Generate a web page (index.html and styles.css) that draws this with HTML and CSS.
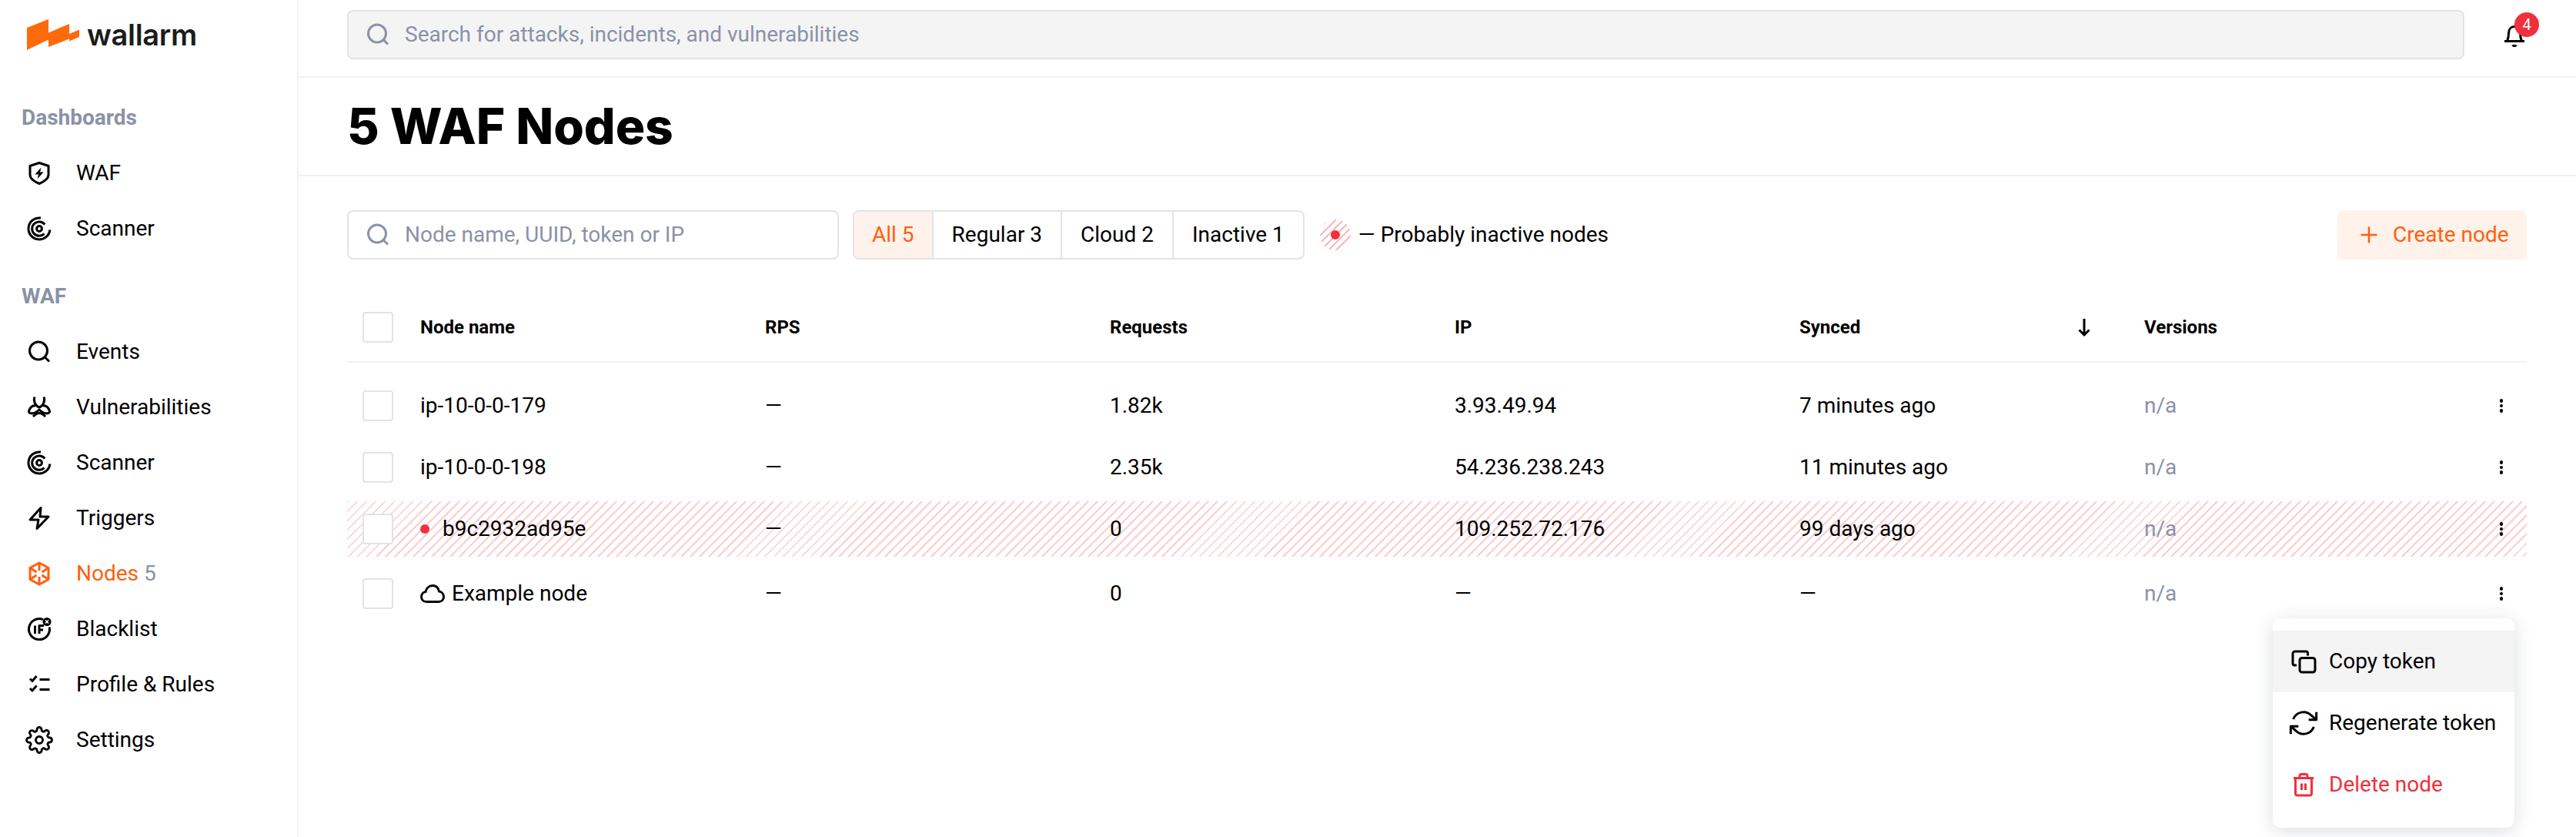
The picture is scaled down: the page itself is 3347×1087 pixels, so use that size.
FILE: index.html
```html
<!DOCTYPE html>
<html lang="en">
<head>
    <meta charset="UTF-8">
    <title>5 WAF Nodes - Wallarm</title>
    <link rel="stylesheet" href="styles.css">
</head>
<body>
    <svg class="defs" width="0" height="0">
        <symbol id="i-search" viewBox="0 0 40 40"><circle cx="19" cy="18.5" r="11.5"/><path d="M27.5 27l5.5 5.5"/></symbol>
        <symbol id="i-scanner" viewBox="0 0 40 40"><path d="M22 6.1A14 14 0 1 0 33.9 21.5"/><path d="M27.2 14.5A9.2 9.2 0 1 0 26.5 26.5"/><circle cx="20" cy="20" r="3.4"/></symbol>
    </svg>
    <div class="app">
        <aside class="sidebar">
            <a class="logo">
                <svg width="68" height="40" viewBox="0 0 68 40"><path class="logo-mark" d="M0 11L28 0V17.500L55 6V19L68 13.500V23L55 28.500V25.500L28 36V26.500L0 40Z"/></svg>
                <span class="logo-text">wallarm</span>
            </a>
            <div class="nav-label">Dashboards</div>
            <a class="nav-item">
                <svg class="icon" viewBox="0 0 40 40"><path d="M20 6.500L32 10.500V22C32 27 26 31 20 33.500C14 31 8 27 8 22V10.500Z"/><path class="solid" d="M22.500 12.500L14.500 21.500H19L17.500 27.500L25.500 18.500H21Z"/></svg>
                <span>WAF</span>
            </a>
            <a class="nav-item">
                <svg class="icon"><use href="#i-scanner"/></svg>
                <span>Scanner</span>
            </a>
            <div class="nav-label nav-label-gap">WAF</div>
            <a class="nav-item">
                <svg class="icon"><use href="#i-search"/></svg>
                <span>Events</span>
            </a>
            <a class="nav-item">
                <svg class="icon" viewBox="0 0 40 40"><path d="M14 6.500C12 12 15 18 20 20C25 18 28 12 26 6.500"/><path d="M6.500 27C6.500 21 11 17 15.500 18M33.500 27C33.500 21 29 17 24.500 18"/><path d="M6.500 27C11 29 16 27 20 23C24 27 29 29 33.500 27"/><path d="M12 32C15 29 17.500 27.500 20 27.500C22.500 27.500 25 29 28 32"/></svg>
                <span>Vulnerabilities</span>
            </a>
            <a class="nav-item">
                <svg class="icon"><use href="#i-scanner"/></svg>
                <span>Scanner</span>
            </a>
            <a class="nav-item">
                <svg class="icon" viewBox="0 0 40 40"><path d="M22 6.500L8 22H19L17 33.500L32 18H21Z"/></svg>
                <span>Triggers</span>
            </a>
            <a class="nav-item active">
                <svg class="icon" viewBox="0 0 40 40"><path d="M20 6L32 12.500V27.500L20 34L8 27.500V12.500Z"/><path d="M20 6V16M20 24V34M8 12.500L16.500 18M32 12.500L23.500 18M8 27.500L16.500 22M32 27.500L23.500 22"/></svg>
                <span>Nodes <em>5</em></span>
            </a>
            <a class="nav-item">
                <svg class="icon" viewBox="0 0 40 40"><path d="M25 7.600A13.500 13.500 0 1 0 33.200 17.500"/><path d="M14.500 15.500V26M20 26V15.500H26M20 21H25"/><circle class="solid" cx="30" cy="10.500" r="5.500"/><path class="cross" d="M28 8.500L32 12.500M32 8.500L28 12.500"/></svg>
                <span>Blacklist</span>
            </a>
            <a class="nav-item">
                <svg class="icon" viewBox="0 0 40 40"><path d="M8 12.500L11 15.500L16.500 9M8 25L11 28L16.500 21.500"/><path d="M20.500 13.500H33.500M20.500 26.500H33.500"/></svg>
                <span>Profile &amp; Rules</span>
            </a>
            <a class="nav-item">
                <svg class="icon gear" viewBox="0 0 24 24"><circle cx="12" cy="12" r="3"/><path d="M19.400 15a1.650 1.650 0 0 0 .33 1.820l.06.06a2 2 0 0 1 0 2.830 2 2 0 0 1-2.830 0l-.06-.06a1.650 1.650 0 0 0-1.820-.33 1.650 1.650 0 0 0-1 1.510V21a2 2 0 0 1-2 2 2 2 0 0 1-2-2v-.09A1.650 1.650 0 0 0 9 19.400a1.650 1.650 0 0 0-1.820.33l-.06.06a2 2 0 0 1-2.830 0 2 2 0 0 1 0-2.830l.06-.06a1.650 1.650 0 0 0 .33-1.820 1.650 1.650 0 0 0-1.510-1H3a2 2 0 0 1-2-2 2 2 0 0 1 2-2h.09A1.650 1.650 0 0 0 4.600 9a1.650 1.650 0 0 0-.33-1.820l-.06-.06a2 2 0 0 1 0-2.830 2 2 0 0 1 2.830 0l.06.06a1.650 1.650 0 0 0 1.820.33H9a1.650 1.650 0 0 0 1-1.510V3a2 2 0 0 1 2-2 2 2 0 0 1 2 2v.09a1.650 1.650 0 0 0 1 1.510 1.650 1.650 0 0 0 1.820-.33l.06-.06a2 2 0 0 1 2.830 0 2 2 0 0 1 0 2.830l-.06.06a1.650 1.650 0 0 0-.33 1.820V9a1.650 1.650 0 0 0 1.510 1H21a2 2 0 0 1 2 2 2 2 0 0 1-2 2h-.09a1.650 1.650 0 0 0-1.510 1z"/></svg>
                <span>Settings</span>
            </a>
        </aside>

        <main class="main">
            <header class="topbar">
                <div class="search search-global">
                    <svg class="icon"><use href="#i-search"/></svg>
                    <span>Search for attacks, incidents, and vulnerabilities</span>
                </div>
                <div class="bell">
                    <svg class="icon" viewBox="0 0 40 40"><path d="M7 27.500H33"/><path d="M10.500 27.500C12 24 12.500 21 12.500 17C12.500 12 15.500 8.500 20 8.500S27.500 12 27.500 17C27.500 21 28 24 29.500 27.500"/><path d="M17.500 32.500C18.500 34 21.500 34 22.500 32.500"/></svg>
                    <span class="badge">4</span>
                </div>
            </header>
            <div class="page-title">
                <h1>5 WAF Nodes</h1>
            </div>
            <section class="content">
                <div class="toolbar">
                    <div class="search search-nodes">
                        <svg class="icon"><use href="#i-search"/></svg>
                        <span>Node name, UUID, token or IP</span>
                    </div>
                    <div class="tabs">
                        <span class="tab tab-active">All 5</span>
                        <span class="tab">Regular 3</span>
                        <span class="tab">Cloud 2</span>
                        <span class="tab">Inactive 1</span>
                    </div>
                    <div class="legend">
                        <span class="legend-mark"><i class="dot"></i></span>
                        <span>— Probably inactive nodes</span>
                    </div>
                    <button class="btn-create">
                        <svg width="24" height="24" viewBox="0 0 24 24"><path d="M12 1.500V22.500M1.500 12H22.500"/></svg>
                        Create node
                    </button>
                </div>

                <div class="row row-head">
                    <div><span class="check"></span></div>
                    <div>Node name</div>
                    <div>RPS</div>
                    <div>Requests</div>
                    <div>IP</div>
                    <div class="col-sorted">Synced
                        <svg width="24" height="32" viewBox="0 0 24 32"><path d="M12 5V26M5.500 19.500L12 26L18.500 19.500"/></svg>
                    </div>
                    <div>Versions</div>
                    <div></div>
                </div>

                <div class="rows">
                    <div class="row">
                        <div><span class="check"></span></div>
                        <div>ip-10-0-0-179</div>
                        <div>—</div>
                        <div>1.82k</div>
                        <div>3.93.49.94</div>
                        <div>7 minutes ago</div>
                        <div class="muted">n/a</div>
                        <div class="kebab"><i></i><i></i><i></i></div>
                    </div>
                    <div class="row">
                        <div><span class="check"></span></div>
                        <div>ip-10-0-0-198</div>
                        <div>—</div>
                        <div>2.35k</div>
                        <div>54.236.238.243</div>
                        <div>11 minutes ago</div>
                        <div class="muted">n/a</div>
                        <div class="kebab"><i></i><i></i><i></i></div>
                    </div>
                    <div class="row row-inactive">
                        <div><span class="check"></span></div>
                        <div class="name"><i class="dot"></i>b9c2932ad95e</div>
                        <div>—</div>
                        <div>0</div>
                        <div>109.252.72.176</div>
                        <div>99 days ago</div>
                        <div class="muted">n/a</div>
                        <div class="kebab"><i></i><i></i><i></i></div>
                    </div>
                    <div class="row">
                        <div><span class="check"></span></div>
                        <div class="name name-cloud">
                            <svg width="32" height="26" viewBox="0 0 32 26"><path d="M8 23.500C4 23.500 1.500 20.500 1.500 17C1.500 13.500 4 11 7 10.500C8 6 11.500 2.500 16 2.500C20.500 2.500 23.500 5.500 24.500 10C28 10.500 30.500 13.500 30.500 17C30.500 20.500 28 23.500 24 23.500Z"/></svg>
                            Example node
                        </div>
                        <div>—</div>
                        <div>0</div>
                        <div>—</div>
                        <div>—</div>
                        <div class="muted">n/a</div>
                        <div class="kebab"><i></i><i></i><i></i></div>
                        <ul class="menu">
                            <li class="menu-item menu-hover">
                                <svg class="icon" viewBox="0 0 40 40"><rect x="15" y="15.500" width="20" height="18.500" rx="3"/><path d="M25.500 12.500V9.500A2.500 2.500 0 0 0 23 7H9A3 3 0 0 0 6 10V22.500A2.500 2.500 0 0 0 8.500 25H11"/></svg>
                                Copy token
                            </li>
                            <li class="menu-item">
                                <svg class="icon icon-thin" viewBox="0 0 24 24"><path d="M22 3.500V9.500H16M2 20.500V14.500H8"/><path d="M4 9A8.500 8.500 0 0 1 18 6L22 9.500M2 14.500L6 18A8.500 8.500 0 0 0 20 15"/></svg>
                                Regenerate token
                            </li>
                            <li class="menu-item menu-danger">
                                <svg class="icon" viewBox="0 0 40 40"><path d="M7 11.500H33"/><path d="M15 11V8.500A2 2 0 0 1 17 6.500H23A2 2 0 0 1 25 8.500V11"/><path d="M9.500 11.500V31.500A2.500 2.500 0 0 0 12 34H28A2.500 2.500 0 0 0 30.500 31.500V11.500"/><path d="M17.500 18.500V27M22.500 18.500V27"/></svg>
                                Delete node
                            </li>
                        </ul>
                    </div>
                </div>
            </section>
        </main>
    </div>
</body>
</html>
```

FILE: styles.css
```css
:root {
    --text: #000;
    --muted: #8a92a6;
    --line: #f1f1f3;
    --border: #e2e3e9;
    --accent: #ff5f0f;
    --accent-bg: #fff2ea;
    --red: #f0303c;
    --hover: #f4f4f5;
    --stripe: #fccfcf;
}
* { box-sizing: border-box; }
body {
    margin: 0; background: #fff; color: var(--text);
    font-family: 'Roboto', Arial, sans-serif; font-size: 28px;
    line-height: 40px; height: 1087px; overflow: hidden;
}
.defs { position: absolute; }
.app { display: flex; height: 100%; }
.icon {
    width: 40px; height: 40px; flex: none;
    fill: none; stroke: currentColor; stroke-width: 3;
    stroke-linejoin: round;
}
.icon .solid { fill: currentColor; stroke: none; }
.icon .cross { stroke: #fff; stroke-width: 1.6; }
.icon-thin { stroke-width: 1.8; }

/* sidebar */
.sidebar {
    width: 388px; flex: none;
    border-right: 2px solid var(--line);
}
.logo {
    display: flex; align-items: center; gap: 10px;
    height: 117px; padding: 0 0 27px 35px;
}
.logo-mark { fill: #ff6a0d; }
.logo-text {
    font-family: 'Inter', sans-serif; font-weight: 600;
    font-size: 38px; letter-spacing: -0.3px; color: #1c1c1c;
}
.nav-label {
    height: 72px; padding-left: 28px;
    display: flex; align-items: center;
    font-weight: 700; color: var(--muted);
}
.nav-label-gap { margin-top: 16px; }
.nav-item {
    height: 72px; padding-left: 31px;
    display: flex; align-items: center; gap: 28px;
}
.nav-item em { font-style: normal; color: var(--muted); }
.nav-item.active { color: var(--accent); }
.gear { stroke-width: 1.9; padding: 2px; }

/* top bar */
.main { flex: 1; min-width: 0; }
.topbar {
    height: 101px; padding: 13px 60px 0 63px;
    display: flex; gap: 45px;
    border-bottom: 2px solid var(--line);
}
.search {
    height: 64px; padding-left: 20px;
    display: flex; align-items: center; gap: 15px;
    border: 2px solid var(--border); border-radius: 8px;
    color: var(--muted);
}
.search .icon { margin-left: -2px; }
.search-global { flex: 1; background: var(--hover); }
.search-nodes { width: 639px; background: #fff; }
.bell { position: relative; width: 40px; height: 40px; margin-top: 13px; }
.badge {
    position: absolute; top: -10px; left: 20px;
    width: 32px; height: 32px; border-radius: 50%;
    background: var(--red); color: #fff;
    font-size: 20px; line-height: 32px; text-align: center;
}

/* title */
.page-title {
    height: 128px; padding: 0 0 0 63px;
    display: flex; align-items: center;
    border-bottom: 2px solid var(--line);
}
h1 {
    margin: 0;
    font-family: 'Inter', sans-serif; font-weight: 800;
    font-size: 64px; line-height: 72px;
}

/* toolbar */
.content { padding: 44px 64px 0 63px; }
.toolbar { display: flex; align-items: center; height: 64px; margin-bottom: 44px; }
.tabs {
    display: flex; height: 64px; margin-left: 18px;
    border: 2px solid var(--border); border-radius: 8px;
    overflow: hidden;
}
.tab {
    padding: 0 24px; display: flex; align-items: center;
    border-left: 2px solid var(--border);
}
.tab:first-child { border-left: none; padding: 0 23px; }
.tab-active { background: var(--accent-bg); color: var(--accent); }
.legend { display: flex; align-items: center; gap: 10px; margin-left: 20px; }
.legend-mark {
    width: 40px; height: 40px; border-radius: 50%;
    display: flex; align-items: center; justify-content: center;
    background: repeating-linear-gradient(135deg, #fbb9b9 0 2px, transparent 2px 7px);
}
.dot {
    display: block; flex: none; width: 12px; height: 12px;
    border-radius: 50%; background: var(--red);
}
.btn-create {
    margin-left: auto; height: 64px; width: 246px;
    display: flex; align-items: center; gap: 19px; padding: 0 0 0 29px;
    border: none; border-radius: 8px;
    background: var(--accent-bg); color: var(--accent);
    font: inherit;
}
.btn-create svg { stroke: currentColor; stroke-width: 2.500; fill: none; }

/* table */
.row {
    position: relative;
    display: grid; align-items: center;
    grid-template-columns: 95px repeat(5, 448px) 1fr 66px;
    height: 80px;
}
.row-head {
    height: 90px; font-size: 24px; font-weight: 700;
    border-bottom: 2px solid var(--line);
    margin-bottom: 16px;
}
.row-inactive {
    height: 72px; margin: 4px 0 8px;
    background: repeating-linear-gradient(135deg, var(--stripe) 0 2px, #fff 2px 8.500px);
}
.check {
    display: block; width: 40px; height: 40px; margin-left: 20px;
    border: 2px solid var(--border); border-radius: 4px; background: #fff;
}
.col-sorted {
    display: flex; align-items: center; justify-content: space-between;
    padding-right: 66px;
}
.col-sorted svg { stroke: currentColor; stroke-width: 3; fill: none; }
.muted { color: var(--muted); }
.name { display: flex; align-items: center; gap: 17px; }
.name-cloud { gap: 9px; }
.name-cloud svg { stroke: currentColor; stroke-width: 3; fill: none; }
.kebab {
    display: flex; flex-direction: column; align-items: center; gap: 2px;
}
.kebab i { width: 4.500px; height: 4.500px; border-radius: 50%; background: #000; }

/* menu */
.menu {
    position: absolute; top: 72px; right: 16px;
    width: 314px; margin: 0; padding: 16px 0; list-style: none;
    background: #fff; border-radius: 10px;
    box-shadow: 0 4px 24px rgba(40, 50, 80, .16);
}
.menu-item {
    height: 80px; padding-left: 20px;
    display: flex; align-items: center; gap: 13px;
}
.menu-hover { background: var(--hover); }
.menu-danger { color: var(--red); }
```
